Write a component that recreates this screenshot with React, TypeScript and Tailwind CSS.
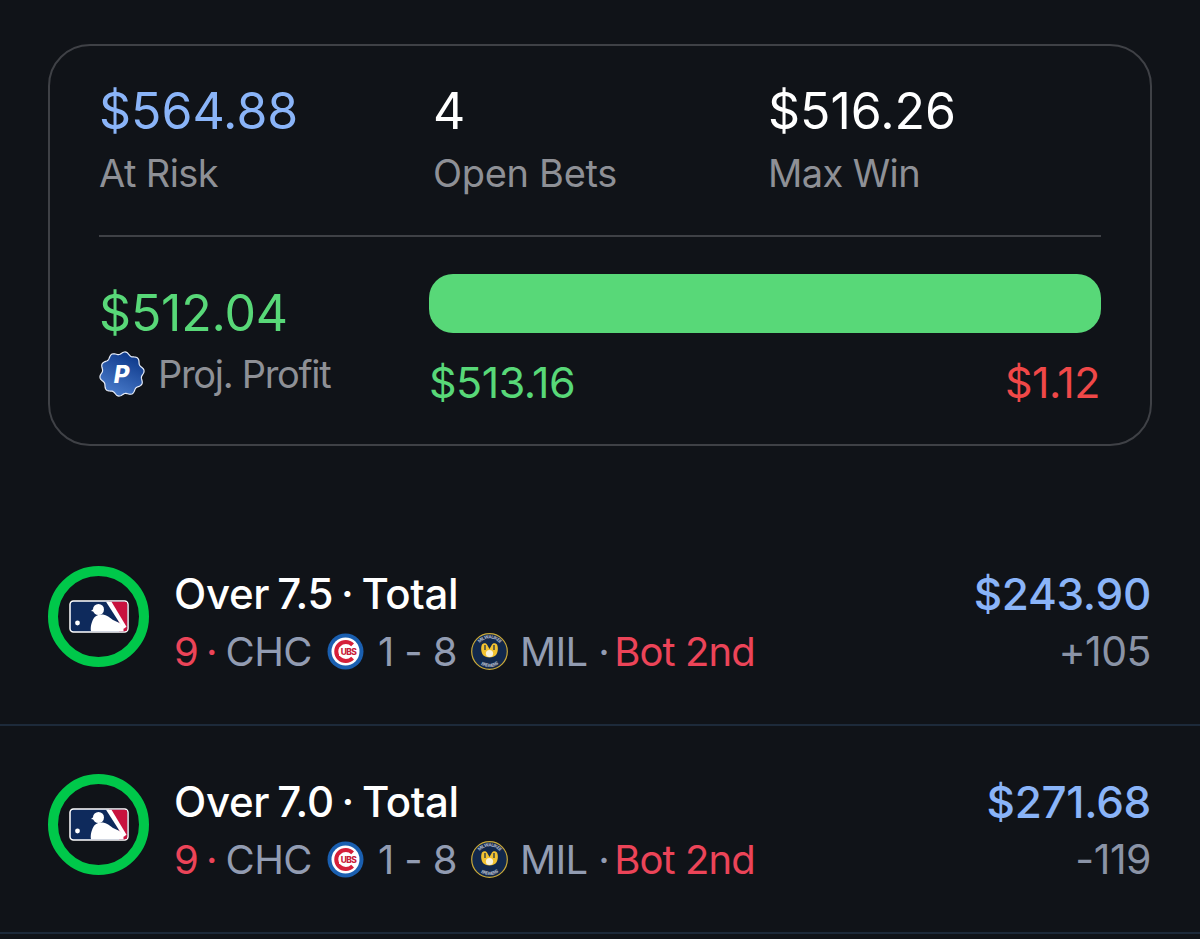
const font = { fontFamily: 'Inter, "Liberation Sans", sans-serif' };

// wavy seal outline for the profit badge
const sealPath = Array.from({ length: 180 }, (_, i) => {
  const a = (i / 180) * Math.PI * 2;
  const r = 21 + 1.3 * Math.cos(a * 10 + Math.PI / 2);
  return `${i === 0 ? 'M' : 'L'}${(23 + r * Math.cos(a)).toFixed(2)} ${(23 + r * Math.sin(a)).toFixed(2)}`;
}).join(' ') + 'Z';

function PBadge() {
  return (
    <svg width="46" height="46" viewBox="0 0 46 46" className="shrink-0">
      <defs>
        <linearGradient id="pb" x1="0.8" y1="0.05" x2="0.35" y2="1">
          <stop offset="0" stopColor="#0b3688" />
          <stop offset="1" stopColor="#4a7ccb" />
        </linearGradient>
      </defs>
      <path d={sealPath} fill="url(#pb)" stroke="#e8eefa" strokeWidth="1.200" />
      <text x="22.500" y="31.500" textAnchor="middle" fontSize="24" fontWeight="800" fontStyle="italic" fill="#ffffff" fontFamily="Inter, sans-serif">
        P
      </text>
    </svg>
  );
}

function MlbLogo() {
  return (
    <svg width="60" height="33" viewBox="0 0 60 33">
      <rect x="1" y="1" width="58" height="31" rx="3.500" fill="#0e2a5c" stroke="#ffffff" strokeWidth="1.500" />
      <path d="M40 1.800h16a2.200 2.200 0 0 1 2.200 2.200v25a2.200 2.200 0 0 1-2.200 2.200h-6v-9z" fill="#c8123e" />
      <path d="M37 1.800h5.500l15 25-3 2.200z" fill="#ffffff" />
      <path
        d="M22 31.200c-.8-4 .5-10 3.500-14 1.500-1.800 5.500-3.200 8.500-2.700 3.500.5 7 3 10 5.500l6.500 3c3 2 4.500 5 4 8.200z"
        fill="#ffffff"
      />
      <circle cx="29.500" cy="9.500" r="5.500" fill="#ffffff" />
      <path d="M25 8.500l-3 2.500 5 1z" fill="#ffffff" />
      <circle cx="8.500" cy="23" r="2.400" fill="#ffffff" />
    </svg>
  );
}

function CubsLogo() {
  return (
    <svg width="37" height="37" viewBox="0 0 37 37" className="shrink-0">
      <circle cx="18.500" cy="18.500" r="18" fill="#1a5fb0" />
      <circle cx="18.500" cy="18.500" r="14" fill="#ffffff" />
      <path d="M27 10.500a11.500 11.500 0 1 0 0 16l-2.800-2.800a7.500 7.500 0 1 1 0-10.400z" fill="#d5203a" />
      <rect x="12" y="14.500" width="19" height="8.500" fill="#ffffff" />
      <text x="21.500" y="21.700" textAnchor="middle" fontSize="8.500" fontWeight="800" fill="#c8203a" fontFamily="Inter, sans-serif">
        UBS
      </text>
    </svg>
  );
}

function BrewersLogo() {
  return (
    <svg width="37" height="37" viewBox="0 0 37 37" className="shrink-0">
      <defs>
        <path id="bwTop" d="M5.500 18.500a13 13 0 0 1 26 0" />
        <path id="bwBottom" d="M3 18.500a15.500 15.500 0 0 0 31 0" />
      </defs>
      <circle cx="18.500" cy="18.500" r="17.800" fill="#12284b" stroke="#c9a93a" strokeWidth="1.200" />
      <text fontSize="4.600" fontWeight="700" fill="#aeb6c6" fontFamily="Inter, sans-serif" textAnchor="middle">
        <textPath href="#bwTop" startOffset="50%">MILWAUKEE</textPath>
      </text>
      <text fontSize="4.600" fontWeight="700" fill="#aeb6c6" fontFamily="Inter, sans-serif" textAnchor="middle">
        <textPath href="#bwBottom" startOffset="50%">BREWERS</textPath>
      </text>
      <path d="M11 11.500c1.500-1.800 3.800-1.800 5 0l2.500 4.500 2.500-4.500c1.200-1.800 3.500-1.800 5 0 1.500 3 1 8.500-1.500 11-3 2.500-9 2.500-12 0-2.500-2.500-3-8-1.500-11z" fill="#f2c230" />
      <path d="M14 12v5M23 12v5" stroke="#12284b" strokeWidth="1.200" />
      <circle cx="18.500" cy="20.500" r="3.600" fill="#f7f2dc" />
    </svg>
  );
}

function BetRow({ title, amount, odds }: { title: string; amount: string; odds: string }) {
  return (
    <div className="h-[208px] flex items-center pl-12 pr-[49px] pb-[10px] border-b-2 border-[#1d2a3a]">
      <div className="w-[101px] h-[101px] shrink-0 rounded-full border-[10px] border-[#00c84a] flex items-center justify-center">
        <MlbLogo />
      </div>
      <div className="ml-[25px] flex-1 pt-[13px]">
        <div className="text-[42px] leading-[58px] font-medium text-white tracking-[-0.3px] [word-spacing:-3px]">{title}</div>
        <div className="flex items-center text-[40px] leading-[57px] text-[#929cb2] tracking-[-0.6px]">
          <span className="text-[#ec4458] tracking-[-2px]">9 ·</span>
          <span className="ml-[10px]">CHC</span>
          <span className="ml-[15px]"><CubsLogo /></span>
          <span className="ml-[14px]">1 - 8</span>
          <span className="ml-[14px]"><BrewersLogo /></span>
          <span className="ml-[12px]">MIL ·</span>
          <span className="ml-[5px] text-[#ec4458] tracking-[-0.9px]">Bot 2nd</span>
        </div>
      </div>
      <div className="text-right pt-[13px]">
        <div className="text-[44px] leading-[58px] font-medium text-[#8ab4f8] tracking-[-0.3px]">{amount}</div>
        <div className="text-[41px] leading-[57px] text-[#8a93a6] tracking-[-0.5px]">{odds}</div>
      </div>
    </div>
  );
}

export default function App() {
  return (
    <div className="w-[1200px] h-[939px] overflow-hidden bg-[#101318]" style={font}>
      <div className="pt-11 px-12">
        <div className="h-[402px] rounded-[42px] border-2 border-[#3f4146] px-[49px] pt-[34px]">
          <div className="grid grid-cols-[334px_335px_1fr] h-[157px] border-b-2 border-[#3f4146]">
            <div>
              <div className="text-[50px] leading-[62px] text-[#8ab4f8]">$564.88</div>
              <div className="text-[38px] leading-[62px] text-[#8e9096] tracking-[-0.6px]">At Risk</div>
            </div>
            <div>
              <div className="text-[50px] leading-[62px] text-white">4</div>
              <div className="text-[38px] leading-[62px] text-[#8e9096] tracking-[-0.3px]">Open Bets</div>
            </div>
            <div>
              <div className="text-[50px] leading-[62px] text-white">$516.26</div>
              <div className="text-[38px] leading-[62px] text-[#8e9096] tracking-[-0.6px]">Max Win</div>
            </div>
          </div>
          <div className="flex pt-[37px]">
            <div className="w-[330px] pt-[8px]">
              <div className="text-[50px] leading-[62px] text-[#58d878] tracking-[-0.2px]">$512.04</div>
              <div className="flex items-center h-[60px]">
                <PBadge />
                <span className="ml-[13px] text-[38px] text-[#8e9096] tracking-[-1.3px]">Proj. Profit</span>
              </div>
            </div>
            <div className="flex-1">
              <div className="h-[59px] rounded-[24px] bg-[#58d878]" />
              <div className="flex justify-between mt-[24px] text-[43px] leading-[50px] tracking-[-0.5px]">
                <span className="text-[#58d878]">$513.16</span>
                <span className="text-[#f04848] mr-px">$1.12</span>
              </div>
            </div>
          </div>
        </div>
      </div>
      <div className="mt-[72px]">
        <BetRow title="Over 7.5 · Total" amount="$243.90" odds="+105" />
        <BetRow title="Over 7.0 · Total" amount="$271.68" odds="-119" />
      </div>
    </div>
  );
}
